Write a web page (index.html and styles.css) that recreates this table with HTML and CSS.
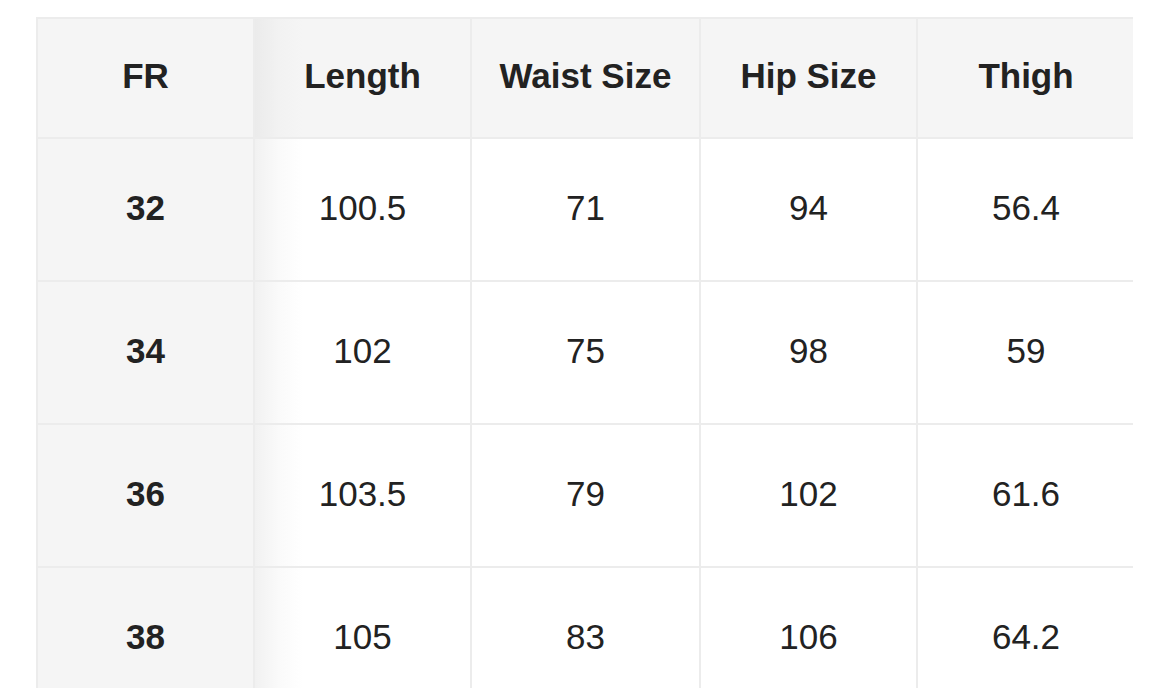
FILE: index.html
```html
<!DOCTYPE html>
<html>
<head>
<meta charset="utf-8">
<link rel="stylesheet" href="styles.css">
</head>
<body>
<div class="wrap">
<table class="size-table">
  <colgroup>
    <col class="c1"><col class="c2"><col class="c3"><col class="c4"><col class="c5">
  </colgroup>
  <thead>
    <tr><th class="fix">FR</th><th class="after-fix">Length</th><th>Waist Size</th><th>Hip Size</th><th>Thigh</th></tr>
  </thead>
  <tbody>
    <tr><th class="fix">32</th><td class="after-fix">100.5</td><td>71</td><td>94</td><td>56.4</td></tr>
    <tr><th class="fix">34</th><td class="after-fix">102</td><td>75</td><td>98</td><td>59</td></tr>
    <tr><th class="fix">36</th><td class="after-fix">103.5</td><td>79</td><td>102</td><td>61.6</td></tr>
    <tr><th class="fix">38</th><td class="after-fix">105</td><td>83</td><td>106</td><td>64.2</td></tr>
  </tbody>
</table>
</div>
</body>
</html>
```
FILE: styles.css
```css
html, body {
  margin: 0;
  padding: 0;
  background: #ffffff;
}
body {
  padding: 17px 0 0 36px;
  font-family: "Liberation Sans", Arial, sans-serif;
  color: #222222;
}
.wrap {
  width: 1097px;
  overflow: hidden;
}
.size-table {
  border-collapse: collapse;
  table-layout: fixed;
  width: 1097px;
  font-size: 35px;
}
.c1 { width: 217px; }
.c2 { width: 217px; }
.c3 { width: 229px; }
.c4 { width: 217px; }
.c5 { width: 217px; }
.size-table th,
.size-table td {
  border: 2px solid #ececec;
  text-align: center;
  vertical-align: middle;
  padding: 0 0 4px 0;
}
.size-table thead th {
  height: 114px;
  background: #f5f5f5;
  font-weight: bold;
}
.size-table tbody tr {
  height: 143px;
}
.size-table tbody th {
  font-weight: bold;
}
.size-table td {
  font-weight: normal;
}
.fix {
  background: #f5f5f5;
}
.size-table tbody td.after-fix {
  background: linear-gradient(to right, #f1f1f1 0px, #fafafa 24px, #ffffff 48px);
}
.size-table thead th.after-fix {
  background: linear-gradient(to right, #ebebeb 0px, #f2f2f2 24px, #f5f5f5 48px);
}
.size-table td:last-child,
.size-table th:last-child {
  border-right: none;
}
```
